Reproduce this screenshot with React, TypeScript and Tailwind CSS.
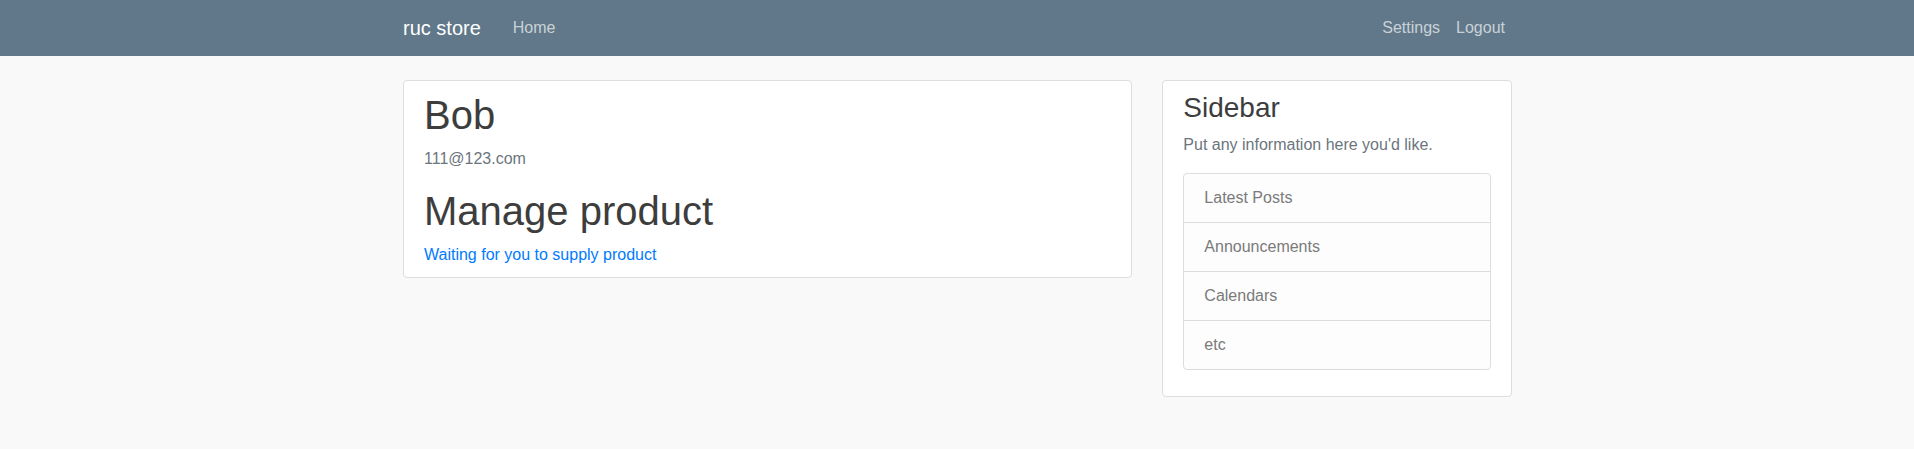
import React from 'react';

const sidebarLinks = ['Latest Posts', 'Announcements', 'Calendars', 'etc'];

export default function App() {
  return (
    <div className="min-h-[449px] bg-[#f9f9f9] font-['Liberation_Sans',Arial,sans-serif] text-[16px] leading-[24px] text-[#212529]">
      {/* Top navbar */}
      <nav className="h-14 bg-[#607889]">
        <div className="mx-auto flex h-full w-[1140px] items-center pl-[16px] pr-[14px]">
          <span className="text-[20px] leading-[30px] text-white">ruc store</span>
          <a className="ml-[24px] px-2 text-[rgba(255,255,255,0.68)]">Home</a>
          <div className="ml-auto flex">
            <a className="px-2 text-[rgba(255,255,255,0.68)]">Settings</a>
            <a className="px-2 text-[rgba(255,255,255,0.68)]">Logout</a>
          </div>
        </div>
      </nav>

      <div className="mx-auto mt-6 flex w-[1140px] items-start pl-[1px]">
        {/* Main column */}
        <div className="w-[760px] px-[15px]">
          <div className="rounded-[4px] border border-[#dddddd] bg-white px-5 py-[10px]">
            <h1 className="mb-2 text-[40px] leading-[48px] text-[#3d3d3d]">Bob</h1>
            <p className="mb-4 text-[#6c757d]">111@123.com</p>
            <h1 className="mb-2 text-[40px] leading-[48px] text-[#3d3d3d]">Manage product</h1>
            <p className="text-[#007bff]">Waiting for you to supply product</p>
          </div>
        </div>

        {/* Sidebar */}
        <div className="w-[380px] px-[15px]">
          <div className="rounded-[4px] border border-[#dddddd] bg-white px-5 py-[10px]">
            <h3 className="mb-2 text-[28px] leading-[33.6px] text-[#3d3d3d]">Sidebar</h3>
            <p className="mb-4 text-[#6c757d]">Put any information here you'd like.</p>
            <ul className="mb-4 rounded-[4px] border border-[#dddddd] bg-[#fdfdfd]">
              {sidebarLinks.map((link, idx) => (
                <li
                  key={idx}
                  className={`px-5 py-3 text-[#7a7a7a] ${idx > 0 ? 'border-t border-[#dddddd]' : ''}`}
                >
                  {link}
                </li>
              ))}
            </ul>
          </div>
        </div>
      </div>
    </div>
  );
}
